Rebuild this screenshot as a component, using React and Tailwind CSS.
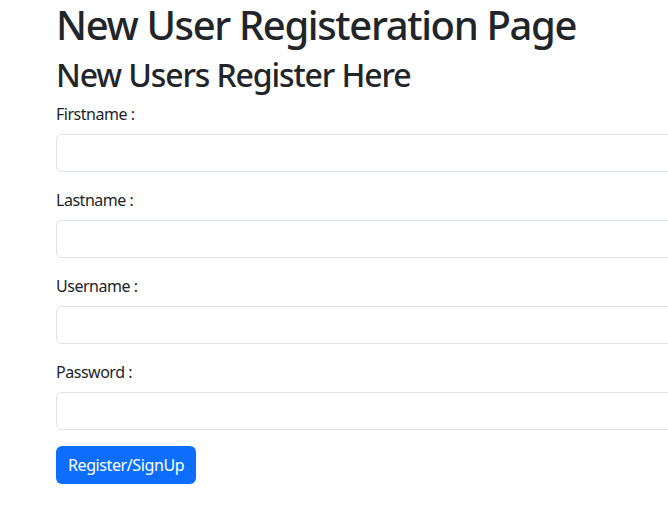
export default function App() {
  const fields = ['Firstname', 'Lastname', 'Username', 'Password']

  return (
    <div className="min-h-screen w-full overflow-hidden bg-white text-[#212529] tracking-[-0.03em]" style={{ fontFamily: '"Noto Sans", "Open Sans", sans-serif' }}>
      <div className="w-[1100px] pl-[56px]">
        <h1 className="mb-2 h-12 w-fit pt-0.5 text-[40px] leading-[46px] font-medium tracking-[-0.034em]">New User Registeration Page</h1>
        <h2 className="mb-2 h-[38.4px] w-fit text-[32px] leading-[38.4px] font-medium tracking-[-0.035em]">New Users Register Here</h2>
        <form onSubmit={e => e.preventDefault()}>
          {fields.map(f => (
            <div key={f} className="mb-4">
              <label className="mb-2 block text-base leading-6">{f} :</label>
              <input
                type={f === 'Password' ? 'password' : 'text'}
                className="block h-[38px] w-full rounded-md border border-[#dee2e6] bg-white px-3 py-1.5 text-base outline-none"
              />
            </div>
          ))}
          <button type="submit" className="h-[38px] rounded-md bg-[#0d6efd] px-3 text-base leading-6 tracking-[-0.025em] text-white">
            Register/SignUp
          </button>
        </form>
      </div>
    </div>
  )
}
